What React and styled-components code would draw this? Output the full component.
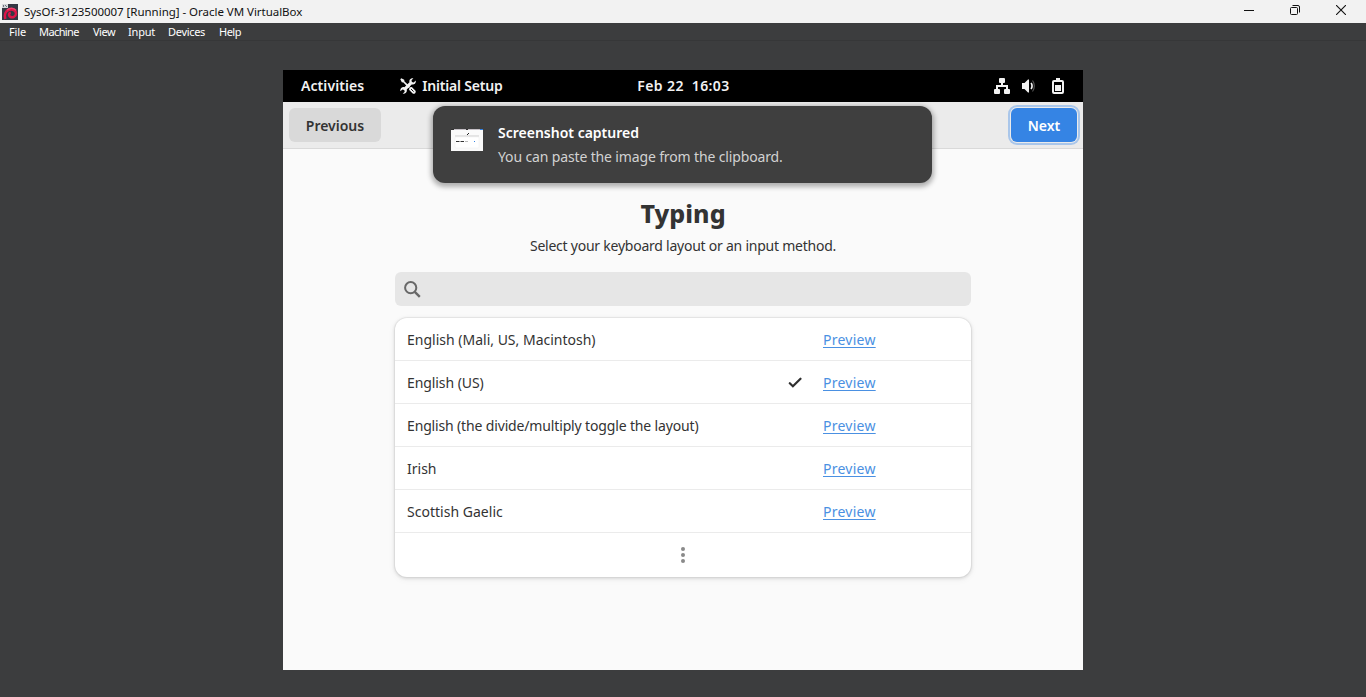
import React from "react";
import styled, { createGlobalStyle, css } from "styled-components";

const Global = createGlobalStyle`
  * { box-sizing: border-box; }
  html, body { margin: 0; height: 100%; overflow: hidden; }
  body { background: #3c3d3e; font-family: "Noto Sans", "Open Sans", sans-serif; }
  button { font-family: inherit; border: 0; padding: 0; }
  svg { display: block; }
`;

const HostWindow = styled.div`
  width: 1366px;
  height: 697px;
  display: flex;
  flex-direction: column;
  background: #3c3d3e;
`;

const TitleBar = styled.header`
  height: 23px;
  flex: none;
  display: flex;
  align-items: center;
  justify-content: space-between;
  padding: 0 2px;
  background: #f2f2f2;
`;

const TitleGroup = styled.div`
  display: flex;
  align-items: center;
  gap: 6px;
`;

const Text = styled.span`
  display: block;
  margin: 0;
  white-space: pre;
  font-size: ${(p) => p.$size || 14}px;
  line-height: ${(p) => p.$line || 20}px;
  font-weight: ${(p) => p.$weight || 400};
  letter-spacing: ${(p) => p.$track || 0}px;
  color: ${(p) => p.$color || "#333"};
`;

const WindowControls = styled.div`
  display: flex;
  align-items: center;
  height: 22px;
`;

const ControlButton = styled.button`
  width: 46px;
  height: 20px;
  margin-bottom: 3px;
  display: flex;
  align-items: center;
  justify-content: center;
  background: transparent;
  color: #111;
`;

const MenuBar = styled.nav`
  height: 18px;
  flex: none;
  display: grid;
  grid-template-columns: 30px 54px 35px 40px 51px 1fr;
  padding-left: 9px;
  border-bottom: 1px solid #363738;
`;

const Stage = styled.main`
  flex: 1;
  display: flex;
  justify-content: center;
  padding-top: 29px;
`;

const Desktop = styled.div`
  position: relative;
  width: 800px;
  height: 600px;
  display: flex;
  flex-direction: column;
  background: #fafafa;
`;

const TopBar = styled.div`
  height: 32px;
  flex: none;
  display: grid;
  grid-template-columns: 1fr auto 1fr;
  align-items: center;
  padding: 0 17px 0 18px;
  background: #000;
`;

const TopLeft = styled.div`
  display: flex;
  align-items: center;
`;

const AppMenu = styled.div`
  display: flex;
  align-items: center;
  gap: 6px;
  margin-left: 36px;
`;

const StatusIcons = styled.div`
  display: flex;
  justify-content: flex-end;
  align-items: center;
  gap: 12px;
`;

const HeaderBar = styled.div`
  height: 47px;
  flex: none;
  display: flex;
  justify-content: space-between;
  align-items: flex-start;
  padding: 6px 6px 0;
  background: #ebebeb;
  border-bottom: 1px solid #d9d9d9;
`;

const HeaderButton = styled.button`
  height: 34px;
  width: ${(p) => p.$width}px;
  padding-top: 2px;
  display: flex;
  align-items: center;
  justify-content: center;
  border-radius: 6px;
  background: #d9d9d9;
  ${(p) =>
    p.$suggested &&
    css`
      background: #3584e4;
      box-shadow: 0 0 0 1px #ebebeb, 0 0 0 3px #a9c6ea;
    `}
`;

const Page = styled.section`
  width: 576px;
  margin: 0 auto;
  padding-top: 46px;
  display: flex;
  flex-direction: column;
`;

const Intro = styled.div`
  display: flex;
  flex-direction: column;
  align-items: center;
  gap: 3px;
`;

const SearchField = styled.div`
  height: 34px;
  margin-top: 14px;
  padding-left: 9px;
  display: flex;
  align-items: center;
  border-radius: 6px;
  background: #e6e6e6;
`;

const LayoutList = styled.div`
  margin-top: 12px;
  border-radius: 12px;
  background: #fff;
  box-shadow: 0 0 0 1px rgba(0, 0, 0, 0.04), 0 1px 3px 1px rgba(0, 0, 0, 0.1),
    0 2px 6px 2px rgba(0, 0, 0, 0.03);
`;

const LayoutRow = styled.div`
  height: 43px;
  display: grid;
  grid-template-columns: 381px 35px 1fr;
  align-items: center;
  padding: 2px 0 0 12px;
  border-bottom: 1px solid #ebebeb;
`;

const PreviewLink = styled.a`
  justify-self: start;
  font-size: 14px;
  line-height: 20px;
  letter-spacing: 0.25px;
  color: #4a90e2;
  text-decoration: underline;
  text-decoration-thickness: 1px;
  text-underline-offset: 2px;
`;

const MoreRow = styled.div`
  height: 44px;
  display: flex;
  align-items: center;
  justify-content: center;
`;

const Notification = styled.aside`
  position: absolute;
  top: 36px;
  left: 150px;
  width: 499px;
  height: 77px;
  padding: 17px 18px 0;
  display: flex;
  gap: 15px;
  border-radius: 12px;
  background: #3f3f3f;
  box-shadow: 0 2px 5px 2px rgba(0, 0, 0, 0.3);
`;

const Thumb = styled.div`
  padding-top: 6px;
`;

const Message = styled.div`
  display: flex;
  flex-direction: column;
  gap: 4px;
`;

const VmIcon = () => (
  <svg width="16" height="16" viewBox="0 0 16 16">
    <rect width="16" height="16" fill="#343743" />
    <path d="M0 0h6v4H0z" fill="#d5d7da" />
    <path d="M1 1h1v2H1zM3 1h1v1H3zM4 2h1v1H4z" fill="#707580" />
    <path d="M3.4 15C2 11 3.400 7.200 6.600 6c3.600-1.400 7.400.2 7.400 3.500 0 3.200-3.600 4.600-5.900 3.100-1.900-1.300-1.200-3.600.7-3.800" fill="none" stroke="#dc1448" strokeWidth="2.500" />
    <path d="M5 6C7.500 3.600 12 3.600 14 6.400" fill="none" stroke="#f0406c" strokeWidth="1.500" />
  </svg>
);

const SetupIcon = () => (
  <svg width="16" height="16" viewBox="0 0 16 16" fill="#f2f2f2">
    <path d="M.3 1.200 1.300.2l2.900 1.600.3 1.600 5.400 5.200-1.300 1.300-5.200-5.400-1.600-.3z" />
    <path d="M15.700 2.600c.7 2.600-1.700 4.600-4 3.800l-5 5c.8 2.400-1.200 4.900-4 4.300l2-2-.5-1.800-1.800-.5-2 1.800c-.7-2.700 1.700-4.700 4-4l5.100-5C8.700 1.800 10.800-.5 13.400.3l-1.900 2 .4 1.700 1.800.5z" />
    <path d="m9.600 9.200 2.200-.2 3.700 3.700c1 1.700-1.100 3.800-2.800 2.800L9 11.800z" />
    <path d="m11 11 2.600 2.600" stroke="#000" strokeWidth=".9" />
  </svg>
);

const NetworkIcon = () => (
  <svg width="16" height="16" viewBox="0 0 16 16" fill="#f2f2f2">
    <rect x="5" width="6" height="5" rx="1" />
    <rect y="11" width="6" height="5" rx="1" />
    <rect x="10" y="11" width="6" height="5" rx="1" />
    <path d="M7 4h2v3h5v5h-2V9H4v3H2V7h5z" />
  </svg>
);

const VolumeIcon = () => (
  <svg width="16" height="16" viewBox="0 0 16 16">
    <path d="M0 5h2.500L6 1.500h1v13H6L2.500 11H0z" fill="#f2f2f2" />
    <path d="M9 5c1.400 1.500 1.400 4.500 0 6" fill="none" stroke="#f2f2f2" strokeWidth="1.700" />
    <path d="M10.500 2.500c2.400 3 2.400 8 0 11" fill="none" stroke="#555" strokeWidth="1.200" />
  </svg>
);

const BatteryIcon = () => (
  <svg width="16" height="16" viewBox="0 0 16 16" fill="#f2f2f2">
    <path fillRule="evenodd" d="M6 0h4v2h2a2 2 0 0 1 2 2v10a2 2 0 0 1-2 2H4a2 2 0 0 1-2-2V4a2 2 0 0 1 2-2h2zM4 4v10h8V4z" />
    <path d="M5 7h6v6H5z" />
  </svg>
);

const SearchIcon = () => (
  <svg width="17" height="17" viewBox="0 0 17 17" fill="none" stroke="#686868" strokeWidth="2">
    <circle cx="6.700" cy="6.700" r="5.600" />
    <path d="m10.800 10.800 5 5" strokeWidth="2.400" />
  </svg>
);

const CheckIcon = () => (
  <svg width="14" height="14" viewBox="0 0 14 14" fill="none" stroke="#2f2f2f" strokeWidth="2.200">
    <path d="m1.800 7.200 3.100 3.100 7.600-7.600" strokeLinecap="round" />
  </svg>
);

const ScreenshotThumb = () => (
  <svg width="32" height="22" viewBox="0 0 32 22">
    <rect width="32" height="22" fill="#fafafa" />
    <path d="M0 0h32v1H0z" fill="#c5c0c6" />
    <path d="M0 0h3v1H0zM15 0h2v1h-2z" fill="#333" />
    <path d="M29 0h3v1h-3z" fill="#3584e4" />
    <path d="M17 4h1v1h-1zM16 5h1v1h-1z" fill="#222" />
    <path d="M4 6h24v2H4z" fill="#e4e4e4" />
    <rect x="4" y="8" width="24" height="11" rx="1" fill="#fff" stroke="#eee" strokeWidth=".5" />
    <path d="M5 12.500h8" stroke="#333" strokeDasharray="3 .5 1 .5" />
    <path d="M14 12.500h3" stroke="#bbb" />
    <path d="M23 12h1v1h-1z" fill="#3584e4" />
  </svg>
);

const menus = [
  ["File", -0.1],
  ["Machine", -0.6],
  ["View", -0.5],
  ["Input", -0.2],
  ["Devices", -0.3],
  ["Help", -0.5],
];

const layouts = [
  { name: "English (Mali, US, Macintosh)", track: 0 },
  { name: "English (US)", track: -0.08, active: true },
  { name: "English (the divide/multiply toggle the layout)", track: -0.15 },
  { name: "Irish", track: 0 },
  { name: "Scottish Gaelic", track: 0.02 },
];

export default function App() {
  return (
    <HostWindow>
      <Global />
      <TitleBar>
        <TitleGroup>
          <VmIcon />
          <Text $size={11.5} $track={-0.03} $color="#111">SysOf-3123500007 [Running] - Oracle VM VirtualBox</Text>
        </TitleGroup>
        <WindowControls>
          <ControlButton aria-label="Minimize">
            <svg width="10" height="10" viewBox="0 0 10 10"><path d="M0 5.500h10" stroke="#111" /></svg>
          </ControlButton>
          <ControlButton aria-label="Restore">
            <svg width="10" height="10" viewBox="0 0 10 10" fill="none" stroke="#111">
              <rect x=".5" y="2.500" width="7" height="7" rx="1" />
              <path d="M2.500.5H8A1.500 1.500 0 0 1 9.500 2v5.500" />
            </svg>
          </ControlButton>
          <ControlButton aria-label="Close">
            <svg width="10" height="10" viewBox="0 0 10 10"><path d="m0 0 10 10M10 0 0 10" stroke="#111" strokeWidth="1.100" /></svg>
          </ControlButton>
        </WindowControls>
      </TitleBar>
      <MenuBar>
        {menus.map(([name, track]) => (
          <Text key={name} $size={11} $line={18} $track={track} $color="#fff">{name}</Text>
        ))}
      </MenuBar>
      <Stage>
        <Desktop>
          <TopBar>
            <TopLeft>
              <Text $weight={600} $track={0.08} $color="#f2f2f2">Activities</Text>
              <AppMenu>
                <SetupIcon />
                <Text $weight={600} $track={-0.18} $color="#f2f2f2">Initial Setup</Text>
              </AppMenu>
            </TopLeft>
            <Text $weight={600} $track={0.38} $color="#f2f2f2">Feb 22  16:03</Text>
            <StatusIcons>
              <NetworkIcon />
              <VolumeIcon />
              <BatteryIcon />
            </StatusIcons>
          </TopBar>
          <HeaderBar>
            <HeaderButton $width={92}>
              <Text $weight={600}>Previous</Text>
            </HeaderButton>
            <HeaderButton $width={66} $suggested>
              <Text $weight={600} $color="#fff">Next</Text>
            </HeaderButton>
          </HeaderBar>
          <Page>
            <Intro>
              <Text as="h1" $size={25} $line={36} $weight={800} $track={0.05}>Typing</Text>
              <Text $line={24} $track={-0.24}>Select your keyboard layout or an input method.</Text>
            </Intro>
            <SearchField>
              <SearchIcon />
            </SearchField>
            <LayoutList>
              {layouts.map((item) => (
                <LayoutRow key={item.name}>
                  <Text $track={item.track}>{item.name}</Text>
                  <span>{item.active && <CheckIcon />}</span>
                  <PreviewLink>Preview</PreviewLink>
                </LayoutRow>
              ))}
              <MoreRow>
                <svg width="4" height="16" viewBox="0 0 4 16" fill="#8a8a8a">
                  <circle cx="2" cy="2" r="2" />
                  <circle cx="2" cy="8" r="2" />
                  <circle cx="2" cy="14" r="2" />
                </svg>
              </MoreRow>
            </LayoutList>
          </Page>
          <Notification>
            <Thumb><ScreenshotThumb /></Thumb>
            <Message>
              <Text $weight={600} $color="#fff">Screenshot captured</Text>
              <Text $color="#d2d2d2" $track={-0.14}>You can paste the image from the clipboard.</Text>
            </Message>
          </Notification>
        </Desktop>
      </Stage>
    </HostWindow>
  );
}
